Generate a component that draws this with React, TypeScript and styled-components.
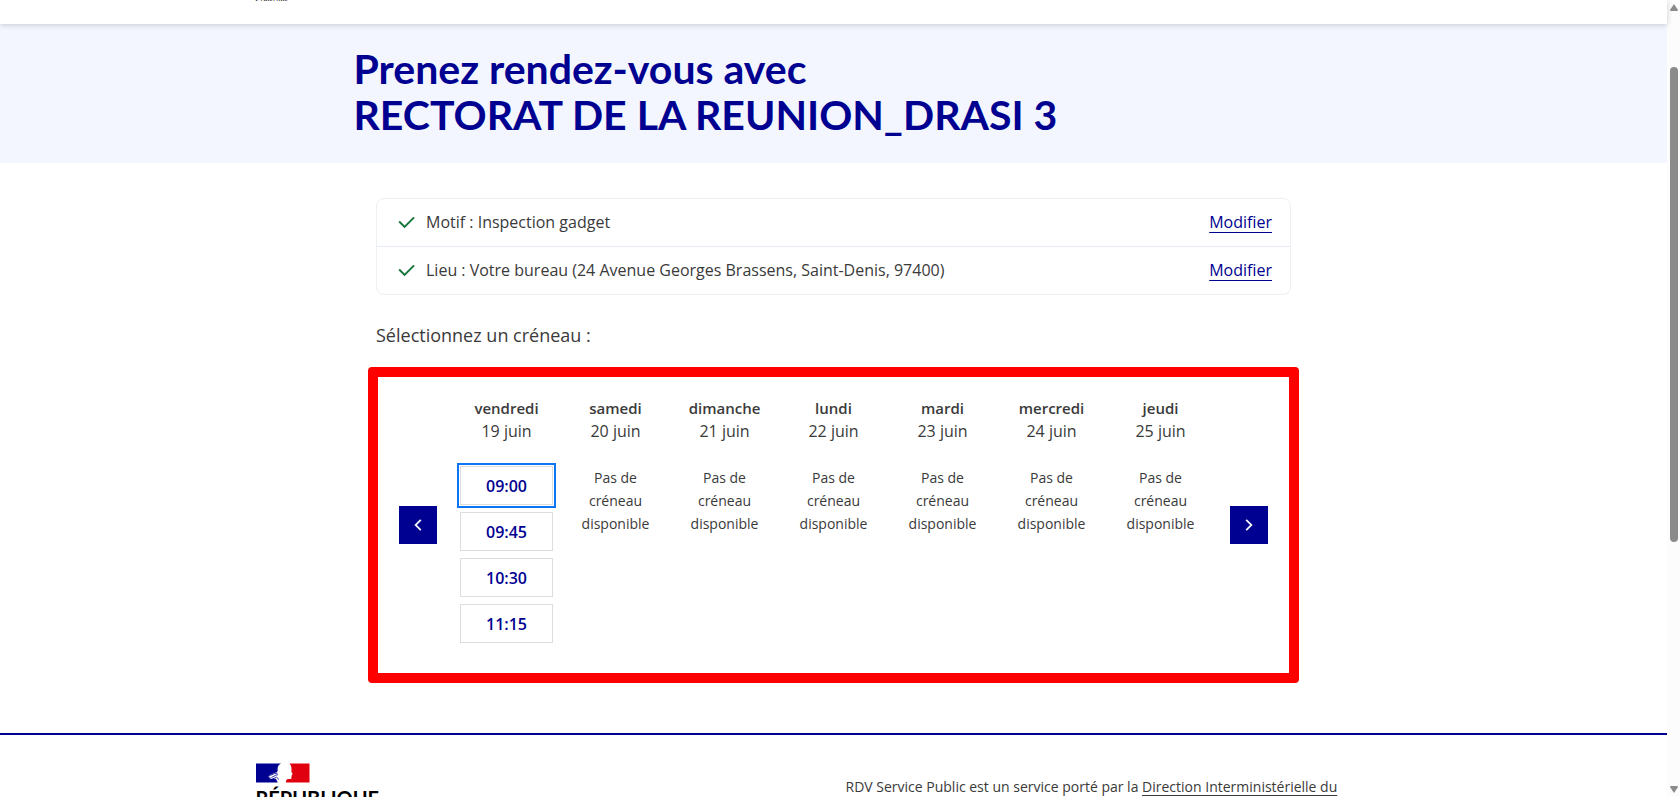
import React from 'react';
import styled, { createGlobalStyle, css } from 'styled-components';

const blue = '#000091';
const text = '#3a3a3a';

const GlobalStyle = createGlobalStyle`
  *, *::before, *::after { box-sizing: border-box; }
  body {
    margin: 0;
    background: #fff;
    color: ${text};
    font-family: "Open Sans", "Noto Sans", sans-serif;
    font-size: 16px;
    line-height: 24px;
  }
`;

const Viewport = styled.div`
  display: flex;
  height: 100vh;
  overflow: hidden;
`;

const Page = styled.div`
  flex: 1;
  min-width: 0;
`;

const Header = styled.header`
  position: relative;
  display: flex;
  align-items: flex-end;
  height: 24px;
  background: #fff;
  box-shadow: 0 1px 6px rgba(0, 0, 18, 0.18);
`;

const Wide = styled.div`
  width: 100%;
  max-width: 1156px;
  margin: 0 auto;
`;

const Motto = styled.span`
  display: block;
  padding-bottom: 21px;
  color: #161616;
  font-family: "Liberation Serif", serif;
  font-size: 8px;
  font-style: italic;
  line-height: 8px;
`;

const Hero = styled.section`
  padding: 22px 0 25px;
  background: #f3f6fe;
`;

const Title = styled.h1`
  max-width: 960px;
  margin: 0 auto;
  color: ${blue};
  font-family: Lato, sans-serif;
  font-size: 41px;
  font-weight: 700;
  line-height: 46px;
`;

const Content = styled.main`
  max-width: 931px;
  margin: 35px auto 50px;
`;

const Summary = styled.ul`
  margin: 0 8px;
  padding: 0;
  list-style: none;
  border: 1px solid #eceff4;
  border-radius: 8px;
`;

const SummaryRow = styled.li`
  display: flex;
  align-items: center;
  gap: 8px;
  padding: 11px 18px 12px;

  & + & {
    border-top: 1px solid #e6eaf2;
  }
`;

const SummaryText = styled.span`
  flex: 1;
`;

const EditLink = styled.a`
  color: ${blue};
  text-decoration: underline;
  text-decoration-thickness: 1px;
  text-underline-offset: 4px;
`;

const Prompt = styled.p`
  margin: 28px 8px 20px;
  font-size: 18px;
`;

const Calendar = styled.section`
  display: flex;
  align-items: center;
  gap: 15px;
  padding: 0 21px;
  border: 10px solid #f00;
  border-radius: 4px;
`;

const NavButton = styled.button`
  display: flex;
  flex: none;
  align-items: center;
  justify-content: center;
  width: 38px;
  height: 38px;
  padding: 0;
  border: 0;
  background: ${blue};
  color: #f5f5fe;
`;

const Days = styled.div`
  display: grid;
  flex: 1;
  grid-template-columns: repeat(7, 1fr);
  padding: 20px 0 30px;
  text-align: center;
`;

const Day = styled.div`
  padding: 0 8px;
`;

const DayHeading = styled.h2`
  margin: 0 0 23px;
  font-size: 16px;
  font-weight: 400;
  line-height: 23px;
`;

const DayName = styled.strong`
  display: block;
  font-size: 15px;
  font-weight: 600;
`;

const Slots = styled.div`
  display: flex;
  flex-direction: column;
  gap: 7px;
`;

const Slot = styled.button<{ $focused?: boolean }>`
  height: 39px;
  padding: 0;
  border: 1px solid #ddd;
  background: #fff;
  color: ${blue};
  font: 600 16px/24px "Open Sans", sans-serif;
  ${(p) =>
    p.$focused &&
    css`
      outline: 2px solid #0a76f6;
      outline-offset: 1px;
    `}
`;

const Empty = styled.p`
  margin: 0;
  font-size: 14px;
  line-height: 23px;
`;

const Footer = styled.footer`
  padding-top: 28px;
  border-top: 2px solid ${blue};
`;

const FooterGrid = styled(Wide)`
  display: grid;
  grid-template-columns: 1fr 1fr;
  column-gap: 24px;
`;

const Brand = styled.div`
  display: flex;
  flex-direction: column;
  gap: 5px;
`;

const BrandName = styled.p`
  margin: 0;
  color: #000;
  font-family: Lato, sans-serif;
  font-size: 20px;
  font-weight: 700;
  line-height: 20px;
`;

const FooterText = styled.p`
  margin: 0;
  padding-top: 12px;
  font-size: 14px;
  line-height: 23px;
`;

const FooterLink = styled.a`
  color: inherit;
  text-decoration: underline;
  text-decoration-thickness: 1px;
  text-underline-offset: 3px;
`;

const ScrollBar = styled.div`
  display: flex;
  flex: none;
  flex-direction: column;
  align-items: center;
  width: 13px;
  padding: 4px 0;
  background: #fcfcfc;
`;

const ScrollTrack = styled.div`
  flex: 1;
  width: 8px;
  padding-top: 56px;
`;

const ScrollThumb = styled.div`
  height: 66%;
  border-radius: 4px;
  background: #8b8b8b;
`;

const CheckIcon = () => (
  <svg width="23" height="23" viewBox="0 0 24 24" fill="#18753c" aria-hidden="true">
    <path d="M10 15.17l9.19-9.19 1.42 1.41L10 18l-6.36-6.36 1.41-1.42z" />
  </svg>
);

const Chevron = ({ d }: { d: string }) => (
  <svg width="22" height="22" viewBox="0 0 24 24" fill="currentColor" aria-hidden="true">
    <path d={d} />
  </svg>
);

const ScrollArrow = ({ d }: { d: string }) => (
  <svg width="8" height="7" viewBox="0 0 8 7" fill="#8b8b8b" aria-hidden="true">
    <path d={d} />
  </svg>
);

const Flag = () => (
  <svg width="54" height="20" viewBox="0 0 54 20" role="img" aria-label="Marianne">
    <path
      d="M0 .5h25c-1.500.8-2.800 2-3.200 3.800-.4 1.600.2 2.700-.3 3.900-.5 1.200-1.800 1.500-3 1.900l-3.500 1.400-3 2.500 2-.5-1 1.500 2.500-.6-2 1.800 3.500-.6 3 .4 1.800 3.500H0z"
      fill="#000091"
    />
    <path
      d="M33.500.5H53.500v19H30c-.2-1.500.3-3 1.800-3.400l2.700-.2c1.200-.2 1-1.200.8-2l.6-.8-.3-1 .9-.7c.4-.6-1-2-1.200-3.200.5-2.500.4-5.500-1.800-7.700z"
      fill="#e1000f"
    />
    <path
      d="M14.500 12.500l4-2 3-.3M15.500 14.500l4.500-2.500 2-.3M16.500 16l4-1.800 2.500 2.300"
      fill="none"
      stroke="#000091"
      strokeWidth=".8"
    />
  </svg>
);

const summary = [
  'Motif : Inspection gadget',
  'Lieu : Votre bureau (24 Avenue Georges Brassens, Saint-Denis, 97400)',
];

const days: { name: string; date: string; slots: string[] }[] = [
  { name: 'vendredi', date: '19 juin', slots: ['09:00', '09:45', '10:30', '11:15'] },
  { name: 'samedi', date: '20 juin', slots: [] },
  { name: 'dimanche', date: '21 juin', slots: [] },
  { name: 'lundi', date: '22 juin', slots: [] },
  { name: 'mardi', date: '23 juin', slots: [] },
  { name: 'mercredi', date: '24 juin', slots: [] },
  { name: 'jeudi', date: '25 juin', slots: [] },
];

export default function App() {
  return (
    <>
      <GlobalStyle />
      <Viewport>
        <Page>
          <Header>
            <Wide>
              <Motto>Fraternité</Motto>
            </Wide>
          </Header>
          <Hero>
            <Title>
              Prenez rendez-vous avec
              <br />
              RECTORAT DE LA REUNION_DRASI 3
            </Title>
          </Hero>
          <Content>
            <Summary>
              {summary.map((line) => (
                <SummaryRow key={line}>
                  <CheckIcon />
                  <SummaryText>{line}</SummaryText>
                  <EditLink href="#modifier">Modifier</EditLink>
                </SummaryRow>
              ))}
            </Summary>
            <Prompt>Sélectionnez un créneau :</Prompt>
            <Calendar>
              <NavButton type="button" aria-label="Semaine précédente">
                <Chevron d="M10.83 12l4.95 4.95-1.42 1.41L8 12l6.36-6.36 1.42 1.41z" />
              </NavButton>
              <Days>
                {days.map((day, d) => (
                  <Day key={day.name}>
                    <DayHeading>
                      <DayName>{day.name}</DayName>
                      {day.date}
                    </DayHeading>
                    {day.slots.length > 0 ? (
                      <Slots>
                        {day.slots.map((slot, s) => (
                          <Slot key={slot} type="button" $focused={d === 0 && s === 0}>
                            {slot}
                          </Slot>
                        ))}
                      </Slots>
                    ) : (
                      <Empty>
                        Pas de
                        <br />
                        créneau
                        <br />
                        disponible
                      </Empty>
                    )}
                  </Day>
                ))}
              </Days>
              <NavButton type="button" aria-label="Semaine suivante">
                <Chevron d="M13.17 12L8.22 7.05l1.42-1.41L16 12l-6.36 6.36-1.42-1.41z" />
              </NavButton>
            </Calendar>
          </Content>
          <Footer>
            <FooterGrid>
              <Brand>
                <Flag />
                <BrandName>RÉPUBLIQUE</BrandName>
              </Brand>
              <FooterText>
                RDV Service Public est un service porté par la{' '}
                <FooterLink href="#dinum">Direction Interministérielle du</FooterLink>
              </FooterText>
            </FooterGrid>
          </Footer>
        </Page>
        <ScrollBar aria-hidden="true">
          <ScrollArrow d="M4 0l4 6q0 1-1 1H1q-1 0-1-1z" />
          <ScrollTrack>
            <ScrollThumb />
          </ScrollTrack>
          <ScrollArrow d="M4 7L0 1q0-1 1-1h6q1 0 1 1z" />
        </ScrollBar>
      </Viewport>
    </>
  );
}
